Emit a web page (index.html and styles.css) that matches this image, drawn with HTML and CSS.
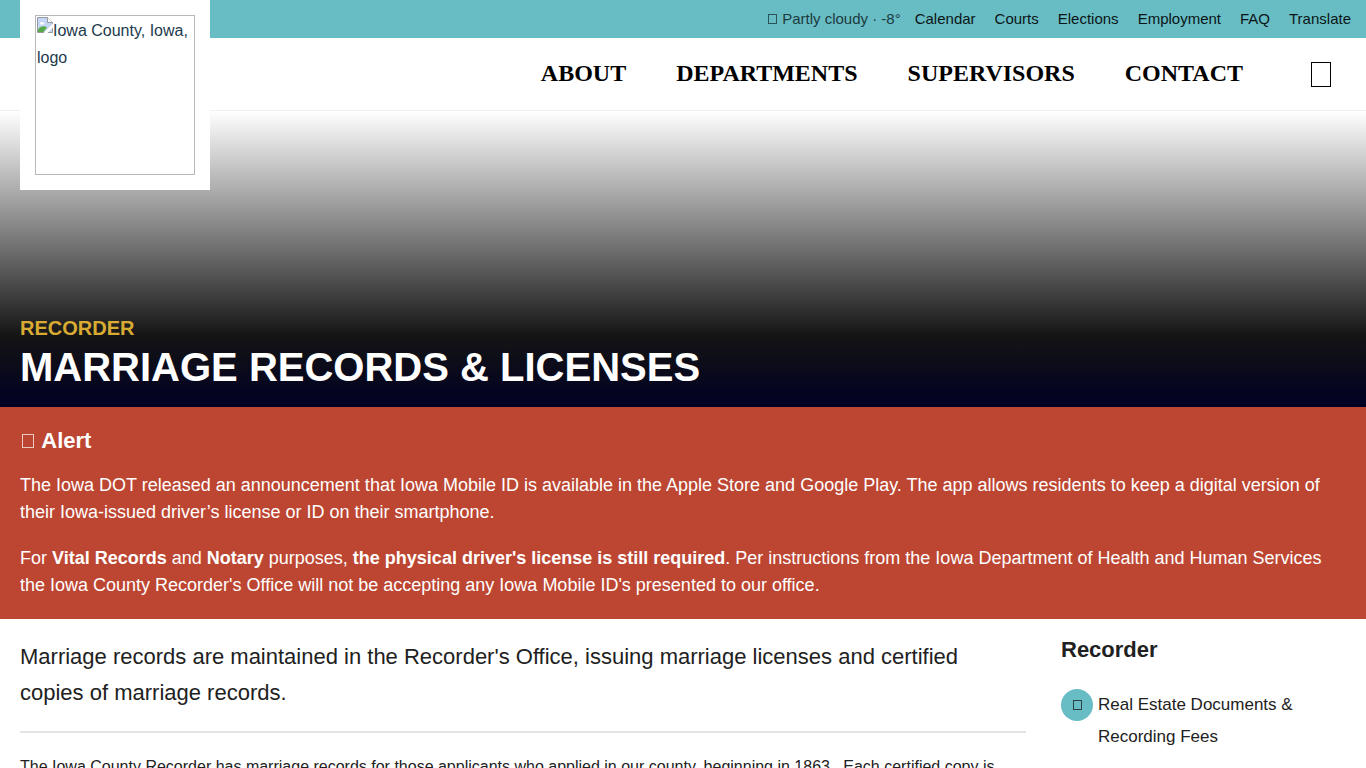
FILE: index.html
```html
<!DOCTYPE html>
<html lang="en">
<head>
<meta charset="utf-8">
<meta name="viewport" content="width=device-width, initial-scale=1">
<title>Marriage Records &amp; Licenses</title>
<link rel="stylesheet" href="styles.css">
</head>
<body>
<header class="site-header">
  <a class="logo" href="#">
    <span class="logo-frame">
      <svg class="logo-icon" width="16" height="16" viewBox="0 0 16 16" aria-hidden="true">
        <path d="M.5 .5H10.500L15.500 5.500V15.500H.5Z" fill="#c4d5f5"/>
        <path d="M3 6.500C3 4.800 5.500 4.600 6 5.600C7.500 5.400 8 7.500 6.500 7.500H3.500Z" fill="#fff"/>
        <path d="M1 15V12.500C3.500 9 7 8.500 10 10.500L6.500 15Z" fill="#57a846"/>
        <path d="M.5 .5H10.500L15.500 5.500V15.500H.5Z" fill="none" stroke="#96999e"/>
        <path d="M10.500 .5V5.500H15.500" fill="#fff" stroke="#96999e"/>
        <path d="M6.500 16L16 6.500V10.500L10.500 16Z" fill="#fff"/>
      </svg>Iowa County, Iowa, logo
    </span>
  </a>
  <nav class="top-bar" aria-label="Quick links">
    <span class="weather"><span class="glyph glyph-small"></span> Partly cloudy · -8°</span>
    <a href="#">Calendar</a>
    <a href="#">Courts</a>
    <a href="#">Elections</a>
    <a href="#">Employment</a>
    <a href="#">FAQ</a>
    <a href="#">Translate</a>
  </nav>
  <nav class="main-nav" aria-label="Main">
    <a href="#">About</a>
    <a href="#">Departments</a>
    <a href="#">Supervisors</a>
    <a href="#">Contact</a>
    <button class="search" type="button" aria-label="Search"><span class="glyph glyph-large"></span></button>
  </nav>
</header>
<section class="hero">
  <p class="hero-section">Recorder</p>
  <h1>Marriage Records &amp; Licenses</h1>
</section>
<section class="alert">
  <h2><span class="glyph glyph-medium"></span> Alert</h2>
  <p>The Iowa DOT released an announcement that Iowa Mobile ID is available in the Apple Store and Google Play. The app allows residents to keep a digital version of their Iowa-issued driver’s license or ID on their smartphone.</p>
  <p>For <strong>Vital Records</strong> and <strong>Notary</strong> purposes, <strong>the physical driver's license is still required</strong>. Per instructions from the Iowa Department of Health and Human Services the Iowa County Recorder's Office will not be accepting any Iowa Mobile ID's presented to our office.</p>
</section>
<div class="content">
  <main>
    <p class="intro">Marriage records are maintained in the Recorder's Office, issuing marriage licenses and certified copies of marriage records.</p>
    <hr>
    <p class="body-text">The Iowa County Recorder has marriage records for those applicants who applied in our county, beginning in 1863.&nbsp; Each certified copy is</p>
  </main>
  <aside>
    <h2>Recorder</h2>
    <ul>
      <li><span class="bullet"><span class="glyph glyph-small"></span></span><a href="#">Real Estate Documents &amp; Recording Fees</a></li>
    </ul>
  </aside>
</div>
</body>
</html>
```
FILE: styles.css
```css
* {
  box-sizing: border-box;
}

body {
  margin: 0;
  background: #fff;
  color: #212121;
  font-family: "Liberation Sans", Arial, sans-serif;
  font-size: 16px;
}

h1, h2, p, ul {
  margin: 0;
}

a {
  color: inherit;
  text-decoration: none;
}

.glyph {
  display: inline-block;
  border: 1px solid currentColor;
}

.glyph-small {
  width: 9px;
  height: 10px;
  opacity: 0.8;
}

.glyph-medium {
  width: 12px;
  height: 14px;
  margin: 0 2px;
  opacity: 0.7;
}

.glyph-large {
  width: 20px;
  height: 25px;
}

.site-header {
  position: relative;
  border-bottom: 1px solid #f0f0f0;
}

/* The logo plate hangs over the bars and the hero */
.logo {
  position: absolute;
  z-index: 1;
  top: 0;
  left: 20px;
  padding: 15px;
  background: #fff;
  color: #1d3a4c;
  line-height: 27px;
}

.logo-frame {
  display: block;
  width: 160px;
  height: 160px;
  padding: 1px;
  border: 1px solid #b8b8b8;
}

.logo-icon {
  vertical-align: 3px;
}

.top-bar {
  display: flex;
  justify-content: flex-end;
  align-items: center;
  gap: 19px;
  height: 38px;
  padding: 0 15px 2px;
  background: #68bdc4;
  color: #0b1517;
  font-size: 15px;
}

.weather {
  margin-right: -5px;
  color: #1c3a40;
}

.weather .glyph {
  margin-right: 1px;
}

.main-nav {
  display: flex;
  justify-content: flex-end;
  align-items: center;
  gap: 50px;
  height: 72px;
  padding: 0 35px 2px;
  color: #000;
  font-family: "Liberation Serif", "Times New Roman", serif;
  font-size: 24px;
  font-weight: bold;
  text-transform: uppercase;
}

.search {
  display: flex;
  margin-left: 18px;
  padding: 2px 0 0;
  border: 0;
  background: none;
  color: #000;
}

.hero {
  display: flex;
  flex-direction: column;
  justify-content: flex-end;
  min-height: 296px;
  padding: 16px 20px;
  background: linear-gradient(#fff, #141414 76%, #000024);
  text-transform: uppercase;
}

.hero-section {
  color: #d9ab32;
  font-size: 20px;
  font-weight: bold;
  line-height: 30px;
}

h1 {
  color: #fff;
  font-size: 40px;
  line-height: 48px;
}

.alert {
  padding: 18px 20px 20px;
  background: #bd4632;
  color: #fff;
  font-size: 18px;
  line-height: 27px;
}

.alert p {
  margin-top: 19px;
}

.alert h2 + p {
  margin-top: 15px;
}

h2 {
  font-size: 22px;
  line-height: 32px;
}

.content {
  display: grid;
  grid-template-columns: 1fr 285px;
  gap: 35px;
  padding: 0 20px;
}

.intro {
  margin-top: 20px;
  font-size: 22px;
  line-height: 36px;
}

hr {
  height: 2px;
  margin: 20px 0;
  border: 0;
  background: #e4e4e4;
}

.body-text {
  line-height: 27px;
}

aside h2 {
  margin: 15px 0 23px;
}

aside ul {
  padding: 0;
  list-style: none;
}

aside li {
  display: flex;
  gap: 5px;
  font-size: 17px;
  line-height: 32px;
}

.bullet {
  display: flex;
  flex: none;
  align-items: center;
  justify-content: center;
  width: 32px;
  height: 32px;
  border-radius: 50%;
  background: #68bdc4;
}
```
